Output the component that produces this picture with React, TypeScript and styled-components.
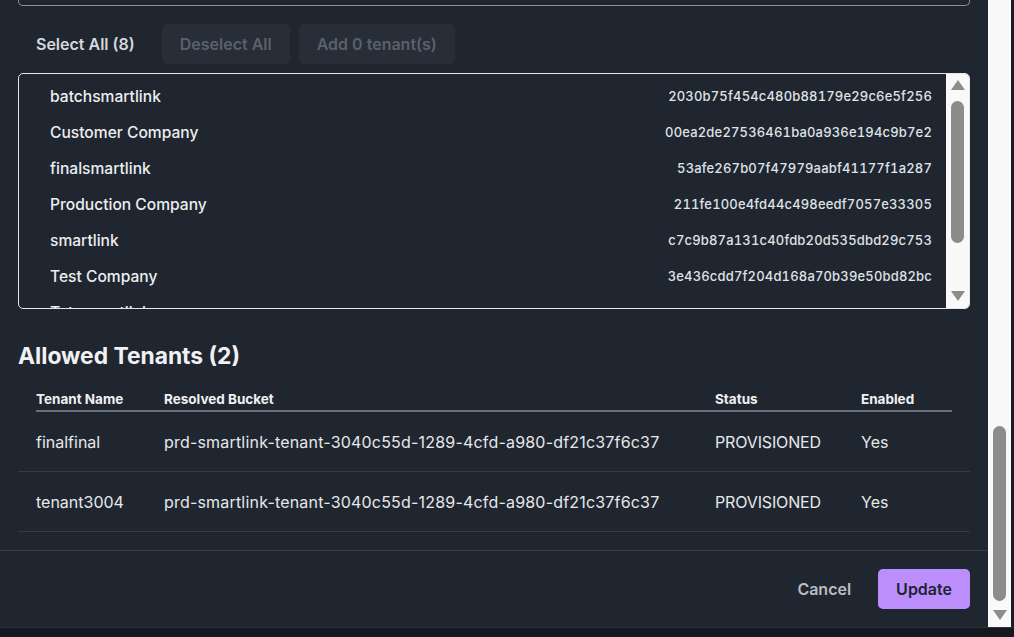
import styled, { createGlobalStyle } from "styled-components";

const GlobalStyle = createGlobalStyle`
  html, body {
    margin: 0;
    padding: 0;
    background: #15191f;
    font-family: Inter, "Noto Sans", sans-serif;
  }
`;

const tenants = [
  { name: "batchsmartlink", id: "2030b75f454c480b88179e29c6e5f256" },
  { name: "Customer Company", id: "00ea2de27536461ba0a936e194c9b7e2" },
  { name: "finalsmartlink", id: "53afe267b07f47979aabf41177f1a287" },
  { name: "Production Company", id: "211fe100e4fd44c498eedf7057e33305" },
  { name: "smartlink", id: "c7c9b87a131c40fdb20d535dbd29c753" },
  { name: "Test Company", id: "3e436cdd7f204d168a70b39e50bd82bc" },
  { name: "Tatasmartlink", id: "" },
];

const allowed = [
  {
    name: "finalfinal",
    bucket: "prd-smartlink-tenant-3040c55d-1289-4cfd-a980-df21c37f6c37",
    status: "PROVISIONED",
    enabled: "Yes",
  },
  {
    name: "tenant3004",
    bucket: "prd-smartlink-tenant-3040c55d-1289-4cfd-a980-df21c37f6c37",
    status: "PROVISIONED",
    enabled: "Yes",
  },
];

const Page = styled.div`
  width: 1014px;
  height: 637px;
  display: flex;
  flex-direction: column;
  overflow: hidden;
  background: #15191f;
`;

const Dialog = styled.div`
  height: 627px;
  display: flex;
  border-bottom: 1px solid #2c323b;
`;

const Content = styled.div`
  width: 988px;
  background: #20262f;
  display: flex;
  flex-direction: column;
  color: #e8eaed;
`;

const Body = styled.div`
  padding: 0 18px;
  display: flex;
  flex-direction: column;
`;

const InputTail = styled.div`
  height: 5px;
  border: 1px solid #8d929a;
  border-top: none;
  border-radius: 0 0 5px 5px;
`;

const ActionRow = styled.div`
  margin-top: 18px;
  display: flex;
  gap: 9px;
  height: 40px;
`;

const GhostButton = styled.button<{ $disabled?: boolean }>`
  height: 40px;
  padding: 0 18px;
  border: none;
  border-radius: 5px;
  font-family: inherit;
  font-size: 16px;
  font-weight: 600;
  background: ${(p) => (p.$disabled ? "#272e38" : "transparent")};
  color: ${(p) => (p.$disabled ? "#59616c" : "#d5d8dd")};
`;

const ListBox = styled.div`
  margin-top: 9px;
  height: 234px;
  border: 1px solid #e4e5e7;
  border-radius: 5px;
  display: flex;
  overflow: hidden;
`;

const ListRows = styled.ul`
  list-style: none;
  margin: 0;
  padding: 4px 14px 0 31px;
  flex: 1;
  overflow: hidden;
`;

const ListRow = styled.li`
  height: 36px;
  display: flex;
  align-items: center;
  justify-content: space-between;
  font-size: 15.6px;
  font-weight: 500;
  color: #eceef0;
`;

const TenantId = styled.span`
  font-size: 13px;
  font-weight: 500;
  letter-spacing: 0.17px;
  font-variant-numeric: tabular-nums;
  color: #dfe2e6;
`;

const ScrollTrack = styled.div<{ $width: number }>`
  width: ${(p) => p.$width}px;
  background: #f9f9f9;
  display: flex;
  flex-direction: column;
  align-items: center;
  flex-shrink: 0;
`;

const Thumb = styled.div`
  width: 13px;
  background: #8c8c8c;
  border-radius: 7px;
`;

const Spacer = styled.div`
  flex: 1;
`;

const Arrow = ({ up }: { up?: boolean }) => (
  <svg width="14" height="10" viewBox="0 0 14 10">
    <polygon
      points={up ? "7,0 14,10 0,10" : "0,0 14,0 7,10"}
      fill="#8c8c8c"
    />
  </svg>
);

const Heading = styled.h2`
  margin: 33px 0 0;
  font-size: 22.8px;
  line-height: 28px;
  font-weight: 700;
  color: #f0f1f3;
`;

const Table = styled.div`
  margin-top: 14px;
  display: flex;
  flex-direction: column;
`;

const columns = "128px 551px 146px 1fr";

const HeaderRow = styled.div`
  margin: 0 18px;
  height: 22px;
  padding-top: 4px;
  display: grid;
  grid-template-columns: ${columns};
  align-items: center;
  border-bottom: 2px solid #6a707a;
  font-size: 13.5px;
  font-weight: 700;
  color: #eef0f2;
`;

const DataRow = styled.div`
  height: 59px;
  padding: 0 18px;
  display: grid;
  grid-template-columns: ${columns};
  align-items: center;
  border-bottom: 1px solid #353b45;
  font-size: 16px;
  color: #e6e8eb;
`;

const Bucket = styled.span`
  letter-spacing: 0.19px;
`;

const Status = styled.span`
  letter-spacing: -0.15px;
`;

const Footer = styled.div`
  margin-top: 18px;
  border-top: 1px solid #363c46;
  padding: 18px 18px 0;
  display: flex;
  justify-content: flex-end;
  gap: 9px;
`;

const FooterButton = styled.button<{ $primary?: boolean }>`
  height: 40px;
  padding: 0 18px;
  border: none;
  border-radius: 5px;
  font-family: inherit;
  font-size: 16px;
  font-weight: 600;
  background: ${(p) => (p.$primary ? "#bc8efc" : "transparent")};
  color: ${(p) => (p.$primary ? "#1d2330" : "#b9bdc4")};
`;

const EdgeStrip = styled.div`
  width: 3px;
  background: #1b1f25;
`;

export default function App() {
  return (
    <Page>
      <GlobalStyle />
      <Dialog>
        <Content>
          <Body>
            <InputTail />
            <ActionRow>
              <GhostButton>Select All (8)</GhostButton>
              <GhostButton $disabled>Deselect All</GhostButton>
              <GhostButton $disabled>Add 0 tenant(s)</GhostButton>
            </ActionRow>
            <ListBox>
              <ListRows>
                {tenants.map((t) => (
                  <ListRow key={t.name}>
                    <span>{t.name}</span>
                    {t.id && <TenantId>{t.id}</TenantId>}
                  </ListRow>
                ))}
              </ListRows>
              <ScrollTrack $width={23} style={{ padding: "6px 0 7px" }}>
                <Arrow up />
                <Thumb style={{ marginTop: 11, height: 142 }} />
                <Spacer />
                <Arrow />
              </ScrollTrack>
            </ListBox>
            <Heading>Allowed Tenants (2)</Heading>
            <Table>
              <HeaderRow>
                <span>Tenant Name</span>
                <span>Resolved Bucket</span>
                <span>Status</span>
                <span>Enabled</span>
              </HeaderRow>
              {allowed.map((r) => (
                <DataRow key={r.name}>
                  <span>{r.name}</span>
                  <Bucket>{r.bucket}</Bucket>
                  <Status>{r.status}</Status>
                  <span>{r.enabled}</span>
                </DataRow>
              ))}
            </Table>
          </Body>
          <Footer>
            <FooterButton>Cancel</FooterButton>
            <FooterButton $primary>Update</FooterButton>
          </Footer>
        </Content>
        <ScrollTrack $width={23} style={{ paddingBottom: 7 }}>
          <Thumb style={{ marginTop: 426, height: 175 }} />
          <Spacer />
          <Arrow />
        </ScrollTrack>
        <EdgeStrip />
      </Dialog>
    </Page>
  );
}
